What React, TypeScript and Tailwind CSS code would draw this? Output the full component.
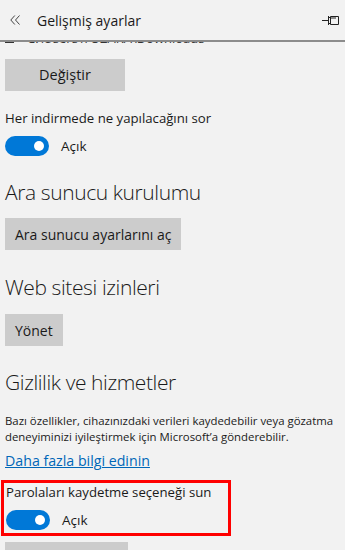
import React from "react";

function Toggle() {
  return (
    <div className="flex items-center">
      <div className="w-[44px] h-[20px] rounded-full bg-[#0078d7] flex items-center justify-end pr-[5px]">
        <div className="w-[10px] h-[10px] rounded-full bg-white" />
      </div>
      <span className="ml-[12px] text-[13.5px] text-[#1a1a1a]">Açık</span>
    </div>
  );
}

export default function App() {
  return (
    <div
      className="w-[345px] h-[550px] overflow-hidden bg-[#f2f2f2] text-[#1a1a1a] flex flex-col"
      style={{ fontFamily: '"Open Sans", "Noto Sans", sans-serif' }}
    >
      <div className="h-[40px] shrink-0 flex items-center border-b-2 border-[#8c8c8c] box-content">
        <svg className="ml-[10px]" width="10" height="10" viewBox="0 0 10 10" fill="none" stroke="#444" strokeWidth="1">
          <path d="M4.8 0.5 L0.8 5 L4.8 9.5" />
          <path d="M9.5 0.5 L5.5 5 L9.5 9.5" />
        </svg>
        <span className="ml-[17px] text-[14px] text-[#1a1a1a]">Gelişmiş ayarlar</span>
        <svg className="ml-auto mr-[6px]" width="17" height="9" viewBox="0 0 17 9" fill="none" stroke="#222" strokeWidth="1">
          <path d="M0 4.5 H6" />
          <path d="M6.5 0 V9" />
          <path d="M6.5 1.5 H8.5" />
          <path d="M6.5 7.5 H8.5" />
          <path d="M8.5 0.5 H16.5 V8.5 H8.5 Z" />
          <path d="M8.5 2 H14" />
        </svg>
      </div>
      <div className="h-[4px] overflow-hidden shrink-0">
        <div className="-mt-[12px] pl-[5px] text-[13px] leading-[16px] text-[#333] flex items-center whitespace-nowrap">
          <span className="inline-block w-[9px] h-[9px] border border-[#333] mr-[13px]" />
          C:\Users\YOZARA\Downloads
        </div>
      </div>

      <div className="px-[5px] flex flex-col items-start">
        <button className="mt-[13px] w-[120px] h-[32px] bg-[#cccccc] text-[14.5px] text-[#1a1a1a]">Değiştir</button>

        <div className="mt-[17px] text-[13.2px] leading-[20px]">Her indirmede ne yapılacağını sor</div>
        <div className="mt-[8px]"><Toggle /></div>

        <div className="mt-[21px] text-[21px] leading-[30px] font-light tracking-[-0.4px]">Ara sunucu kurulumu</div>
        <button className="mt-[11px] h-[32px] px-[10px] bg-[#cccccc] text-[14px] text-[#1a1a1a]">Ara sunucu ayarlarını aç</button>

        <div className="mt-[22px] text-[21px] leading-[30px] font-light tracking-[-0.4px]">Web sitesi izinleri</div>
        <button className="mt-[12px] h-[32px] px-[10px] bg-[#cccccc] text-[14px] text-[#1a1a1a]">Yönet</button>

        <div className="mt-[21px] text-[21px] leading-[30px] font-light tracking-[-0.4px]">Gizlilik ve hizmetler</div>
        <p className="mt-[16px] text-[11.4px] leading-[16px] text-[#1a1a1a] whitespace-nowrap">
          Bazı özellikler, cihazınızdaki verileri kaydedebilir veya gözatma
          <br />
          deneyiminizi iyileştirmek için Microsoft’a gönderebilir.
        </p>
        <a className="mt-[6px] text-[14.2px] leading-[20px] text-[#0067b8] underline">Daha fazla bilgi edinin</a>
      </div>

      <div className="ml-[1px] mt-[9px] w-[230px] border-[3px] border-[#ff0000] px-[2px] pt-0 pb-[2px] shrink-0">
        <div className="text-[13.2px] leading-[18px]">Parolaları kaydetme seçeneği sun</div>
        <div className="mt-[9px]"><Toggle /></div>
      </div>
      <div className="ml-[5px] mt-[6px] w-[123px] h-[32px] bg-[#cccccc] shrink-0" />
    </div>
  );
}
